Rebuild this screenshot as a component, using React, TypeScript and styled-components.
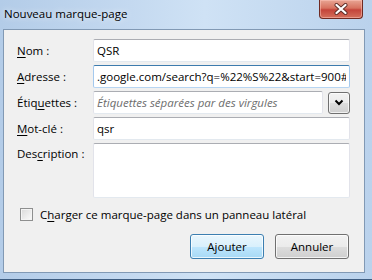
import React from 'react';
import styled, { createGlobalStyle } from 'styled-components';

const GlobalStyle = createGlobalStyle`
  html, body {
    margin: 0;
    padding: 0;
    background: #b9d1ea;
  }
  body {
    font-family: 'Open Sans', 'Noto Sans', sans-serif;
    font-size: 11.5px;
  }
`;

const Window = styled.div`
  width: 372px;
  height: 280px;
  box-sizing: border-box;
  display: flex;
  flex-direction: column;
  background: linear-gradient(90deg, #b3cce8 0%, #c4d9f0 35%, #cfe2f5 55%, #bad2ec 100%);
  border-bottom: 1px solid #3d5c80;
  overflow: hidden;
`;

const TitleBar = styled.div`
  height: 29px;
  flex: none;
  display: flex;
  align-items: flex-start;
  justify-content: space-between;
`;

const Title = styled.span`
  margin: 6px 0 0 4px;
  font-size: 11.5px;
  color: #000;
  text-shadow: 0 0 6px rgba(255, 255, 255, 0.9);
`;

const CloseButton = styled.div`
  width: 44px;
  height: 19px;
  margin-right: 9px;
  box-sizing: border-box;
  display: flex;
  align-items: center;
  justify-content: center;
  border: 1px solid #6f2a22;
  border-top: none;
  border-radius: 0 0 4px 4px;
  background: linear-gradient(180deg, #e8a594 0%, #d7725f 45%, #c4443a 55%, #d4705c 100%);
  box-shadow: inset 0 0 0 1px rgba(255, 200, 190, 0.5);
`;

const Client = styled.div`
  flex: 1;
  margin: 0 7px 6px 3px;
  box-sizing: border-box;
  border: 1px solid #8199b4;
  background: #f0f0f0;
  padding: 9px 14px 0 13px;
  display: flex;
  flex-direction: column;
`;

const Form = styled.div`
  display: grid;
  grid-template-columns: 76px 1fr;
  row-gap: 3px;
`;

const Label = styled.label<{ $top?: boolean }>`
  height: 23px;
  display: flex;
  align-items: center;
  color: #000;
  align-self: ${(p) => (p.$top ? 'start' : 'center')};
  margin-top: ${(p) => (p.$top ? '-1px' : '0')};

  u {
    text-decoration-thickness: 1px;
    text-underline-offset: 2px;
  }
`;

const Field = styled.input<{ $focused?: boolean }>`
  height: 23px;
  box-sizing: border-box;
  width: 100%;
  margin: 0;
  padding: 0 3px;
  font: inherit;
  font-size: 11.5px;
  color: #000;
  background: #fff;
  outline: none;
  border: 1px solid;
  border-radius: 2px;
  border-color: ${(p) =>
    p.$focused ? '#3d7bad #a4c9ee #b7d5f2 #a4c9ee' : '#abadb3 #e2e3ea #e3e9ef #e2e3ea'};

  &::placeholder {
    font-style: italic;
    color: #6d6d6d;
  }
`;

const Area = styled.textarea`
  height: 55px;
  box-sizing: border-box;
  width: 100%;
  margin: 0;
  resize: none;
  background: #fff;
  outline: none;
  border: 1px solid;
  border-radius: 2px;
  border-color: #abadb3 #e2e3ea #e3e9ef #e2e3ea;
`;

const TagRow = styled.div`
  display: flex;
  align-items: center;
  gap: 5px;
`;

const DropButton = styled.div`
  width: 22px;
  height: 22px;
  flex: none;
  box-sizing: border-box;
  display: flex;
  align-items: center;
  justify-content: center;
  border: 1px solid #707070;
  border-radius: 3px;
  background: linear-gradient(180deg, #f2f2f2 0%, #ebebeb 50%, #dddddd 51%, #cfcfcf 100%);
  box-shadow: inset 0 0 0 1px rgba(255, 255, 255, 0.7);
`;

const CheckRow = styled.label`
  display: flex;
  align-items: center;
  gap: 7px;
  margin: 9px 0 0 3px;
  color: #000;

  u {
    text-decoration-thickness: 1px;
    text-underline-offset: 2px;
  }
`;

const Box = styled.span`
  width: 13px;
  height: 13px;
  box-sizing: border-box;
  flex: none;
  border: 1px solid #8e8f8f;
  background: linear-gradient(135deg, #d9d9d9 0%, #eeeeee 60%, #fbfbfb 100%);
  box-shadow: inset 0 0 0 1px #f4f4f4;
`;

const Buttons = styled.div`
  display: flex;
  justify-content: flex-end;
  gap: 11px;
  margin: 12px 1px 0 0;
`;

const Button = styled.div<{ $default?: boolean }>`
  width: 74px;
  height: 25px;
  box-sizing: border-box;
  display: flex;
  align-items: center;
  justify-content: center;
  font-size: 11.5px;
  color: #000;
  border: 1px solid ${(p) => (p.$default ? '#3c7fb1' : '#707070')};
  border-radius: 3px;
  background: ${(p) =>
    p.$default
      ? 'linear-gradient(180deg, #eaf6fd 0%, #d9f0fc 50%, #bee6fd 51%, #a7d9f5 100%)'
      : 'linear-gradient(180deg, #f2f2f2 0%, #ebebeb 50%, #dddddd 51%, #cfcfcf 100%)'};
  box-shadow: inset 0 0 0 1px rgba(255, 255, 255, 0.75);
`;

export default function App() {
  return (
    <>
      <GlobalStyle />
      <Window>
        <TitleBar>
          <Title>Nouveau marque-page</Title>
          <CloseButton>
            <svg width="14" height="12" viewBox="0 0 14 12">
              <path
                d="M2.5 2 L11.5 10 M11.5 2 L2.5 10"
                stroke="#5a2a24"
                strokeWidth="4"
                strokeLinecap="round"
              />
              <path
                d="M2.5 2 L11.5 10 M11.5 2 L2.5 10"
                stroke="#fff"
                strokeWidth="2.3"
                strokeLinecap="round"
              />
            </svg>
          </CloseButton>
        </TitleBar>
        <Client>
          <Form>
            <Label>
              <span>
                <u>N</u>om :
              </span>
            </Label>
            <Field readOnly value="QSR" />

            <Label>
              <span>
                <u>A</u>dresse :
              </span>
            </Label>
            <Field $focused readOnly value=".google.com/search?q=%22%S%22&start=900#" />

            <Label>
              <span>
                Étiq<u>u</u>ettes :
              </span>
            </Label>
            <TagRow>
              <Field readOnly placeholder="Étiquettes séparées par des virgules" />
              <DropButton>
                <svg width="10" height="7" viewBox="0 0 10 7">
                  <path d="M1.5 1.5 L5 5 L8.5 1.5" fill="none" stroke="#000" strokeWidth="2" />
                </svg>
              </DropButton>
            </TagRow>

            <Label>
              <span>
                <u>M</u>ot-clé :
              </span>
            </Label>
            <Field readOnly value="qsr" />

            <Label $top>
              <span>
                Des<u>c</u>ription :
              </span>
            </Label>
            <Area readOnly />
          </Form>

          <CheckRow>
            <Box />
            <span>
              C<u>h</u>arger ce marque-page dans un panneau latéral
            </span>
          </CheckRow>

          <Buttons>
            <Button $default>Ajouter</Button>
            <Button>Annuler</Button>
          </Buttons>
        </Client>
      </Window>
    </>
  );
}
